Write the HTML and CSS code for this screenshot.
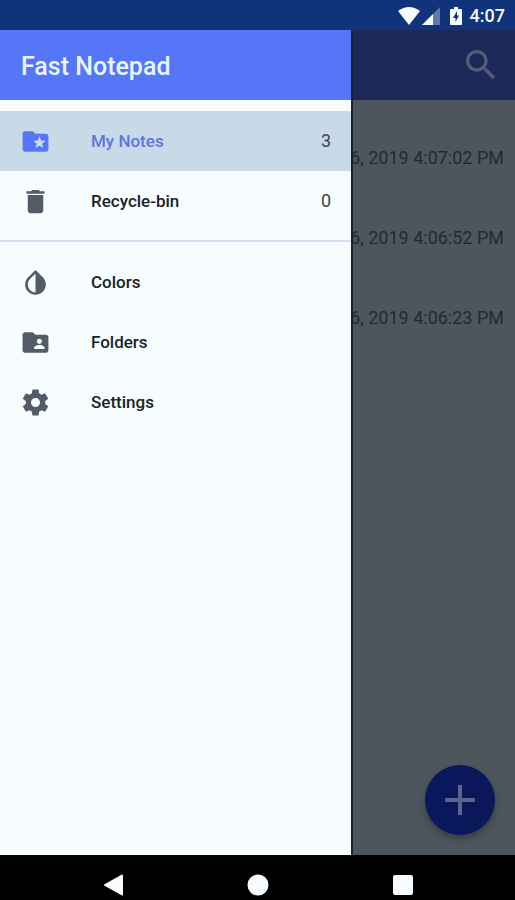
FILE: index.html
```html
<!DOCTYPE html>
<html lang="en">
<head>
<meta charset="utf-8">
<meta name="viewport" content="width=device-width, initial-scale=1">
<title>Fast Notepad</title>
<link rel="stylesheet" href="styles.css">
</head>
<body>
<header class="status">
  <svg class="status-wifi" viewBox="0 0 22 18" aria-hidden="true"><path d="M0 4Q11-4 22 4L11 18Z"/></svg>
  <svg class="status-signal" viewBox="0 0 18 18" aria-hidden="true"><path d="M0 18 18 0V18Z" opacity=".35"/><path d="M0 18 11 7V18Z"/></svg>
  <svg class="status-battery" viewBox="0 0 12 18" aria-hidden="true"><path fill-rule="evenodd" d="M4 0h4v2h3q1 0 1 1v14q0 1-1 1H1q-1 0-1-1V3q0-1 1-1h3ZM7 4 3 11h2.500v4L9 8.500H7Z"/></svg>
  <time class="status-time">4:07</time>
</header>
<div class="app">
  <aside class="drawer">
    <h1 class="drawer-title">Fast Notepad</h1>
    <nav class="menu" aria-label="Main">
      <a class="item item-active" href="#notes">
        <svg class="icon" viewBox="0 0 24 24" aria-hidden="true"><path d="M20 6h-8l-2-2H4c-1.100 0-2 .9-2 2v12c0 1.100.9 2 2 2h16c1.100 0 2-.9 2-2V8c0-1.100-.9-2-2-2zm-2.060 11L15 15.280 12.060 17l.78-3.330-2.590-2.240 3.410-.29L15 8l1.340 3.140 3.410.29-2.590 2.240.78 3.330z"/></svg>
        <span class="label">My Notes</span><span class="count">3</span>
      </a>
      <a class="item" href="#bin">
        <svg class="icon" viewBox="0 0 24 24" aria-hidden="true"><path d="M6 19c0 1.100.9 2 2 2h8c1.100 0 2-.9 2-2V7H6v12zM19 4h-3.500l-1-1h-5l-1 1H5v2h14V4z"/></svg>
        <span class="label">Recycle-bin</span><span class="count">0</span>
      </a>
      <hr class="divider">
      <a class="item" href="#colors">
        <svg class="icon" viewBox="0 0 24 24" aria-hidden="true"><path d="M17.660 7.930 12 2.270 6.340 7.930c-3.120 3.120-3.120 8.190 0 11.310C7.900 20.800 9.950 21.580 12 21.580s4.100-.78 5.660-2.340c3.120-3.120 3.120-8.190 0-11.310zM12 19.590c-1.600 0-3.110-.62-4.240-1.760C6.620 16.690 6 15.190 6 13.590s.62-3.110 1.760-4.240L12 5.100v14.490z"/></svg>
        <span class="label">Colors</span>
      </a>
      <a class="item" href="#folders">
        <svg class="icon" viewBox="0 0 24 24" aria-hidden="true"><path d="M20 6h-8l-2-2H4c-1.100 0-2 .9-2 2v12c0 1.100.9 2 2 2h16c1.100 0 2-.9 2-2V8c0-1.100-.9-2-2-2zm-5 3c1.100 0 2 .9 2 2s-.9 2-2 2-2-.9-2-2 .9-2 2-2zm4 8h-8v-1c0-1.330 2.670-2 4-2s4 .67 4 2v1z"/></svg>
        <span class="label">Folders</span>
      </a>
      <a class="item" href="#settings">
        <svg class="icon" viewBox="0 0 24 24" aria-hidden="true"><path d="M19.430 12.980c.04-.32.07-.64.07-.98s-.03-.66-.07-.98l2.110-1.650c.19-.15.24-.42.12-.64l-2-3.460c-.12-.22-.39-.3-.61-.22l-2.490 1c-.52-.4-1.080-.73-1.690-.98l-.38-2.650C14.460 2.180 14.250 2 14 2h-4c-.25 0-.46.18-.49.42l-.38 2.650c-.61.25-1.170.59-1.690.98l-2.490-1c-.23-.09-.49 0-.61.22l-2 3.460c-.13.22-.07.49.12.64l2.110 1.650c-.04.32-.07.65-.07.98s.03.66.07.98l-2.110 1.650c-.19.15-.24.42-.12.64l2 3.460c.12.22.39.3.61.22l2.490-1c.52.4 1.080.73 1.690.98l.38 2.650c.03.24.24.42.49.42h4c.25 0 .46-.18.49-.42l.38-2.650c.61-.25 1.170-.59 1.690-.98l2.490 1c.23.09.49 0 .61-.22l2-3.460c.12-.22.07-.49-.12-.64l-2.110-1.650zM12 15.500c-1.930 0-3.500-1.570-3.500-3.500s1.570-3.500 3.500-3.500 3.500 1.570 3.500 3.500-1.570 3.500-3.500 3.500z"/></svg>
        <span class="label">Settings</span>
      </a>
    </nav>
  </aside>
  <main class="page">
    <div class="toolbar">
      <button class="search" type="button" aria-label="Search">
        <svg viewBox="0 0 24 24" aria-hidden="true"><path d="M15.500 14h-.79l-.28-.27C15.410 12.590 16 11.110 16 9.500 16 5.910 13.090 3 9.500 3S3 5.910 3 9.500 5.910 16 9.500 16c1.610 0 3.090-.59 4.230-1.570l.27.28v.79l5 4.990L20.490 19l-4.990-5zm-6 0C7.010 14 5 11.990 5 9.500S7.010 5 9.500 5 14 7.010 14 9.500 11.990 14 9.500 14z"/></svg>
      </button>
    </div>
    <ul class="notes">
      <li class="note">6, 2019 4:07:02 PM</li>
      <li class="note">6, 2019 4:06:52 PM</li>
      <li class="note">6, 2019 4:06:23 PM</li>
    </ul>
    <button class="add" type="button" aria-label="Add note">
      <svg viewBox="0 0 32 32" aria-hidden="true"><path d="M14 1h4v13h13v4H18v13h-4V18H1v-4h13Z"/></svg>
    </button>
  </main>
</div>
<footer class="system">
  <button class="key" type="button" aria-label="Back"><svg viewBox="0 0 22 22" aria-hidden="true"><path d="M1.500 10.200 18.500.8q1.500-.8 1.500 1v18.400q0 1.800-1.500 1L1.500 11.800q-1.500-.8 0-1.600Z"/></svg></button>
  <button class="key" type="button" aria-label="Home"><svg viewBox="0 0 22 22" aria-hidden="true"><circle cx="11" cy="11" r="10.500"/></svg></button>
  <button class="key" type="button" aria-label="Recent apps"><svg viewBox="0 0 22 22" aria-hidden="true"><rect x="1" y="1" width="20" height="20" rx="2"/></svg></button>
</footer>
</body>
</html>
```
FILE: styles.css
```css
* {
  box-sizing: border-box;
}

body {
  margin: 0;
  min-height: 100vh;
  display: flex;
  flex-direction: column;
  font-family: Roboto, "Liberation Sans", sans-serif;
  background: #000;
}

button {
  padding: 0;
  border: 0;
  background: none;
}

svg {
  display: block;
  fill: currentColor;
}

.status {
  height: 30px;
  display: flex;
  align-items: center;
  justify-content: flex-end;
  padding: 2px 10px 0 0;
  background: #11337b;
  color: #f5fbff;
}

.status-wifi {
  width: 22px;
  height: 18px;
  margin-right: 2px;
}

.status-signal {
  width: 18px;
  height: 18px;
  margin-right: 10px;
}

.status-battery {
  width: 12px;
  height: 18px;
  margin-right: 8px;
}

.status-time {
  font-size: 18px;
  font-weight: 500;
  line-height: 20px;
}

.app {
  flex: 1;
  display: grid;
  grid-template-columns: minmax(0, 351fr) minmax(0, 164fr);
}

.drawer {
  background: #f7fcff;
}

.drawer-title {
  margin: 0;
  padding: 0 21px;
  font-size: 25px;
  font-weight: 500;
  line-height: 74px;
  height: 70px;
  background: #5577f7;
  color: #e6f5ff;
}

.menu {
  padding-top: 11px;
}

.item {
  height: 60px;
  display: flex;
  align-items: center;
  padding: 0 20px;
  color: #1b2226;
  text-decoration: none;
  font-size: 17px;
  font-weight: 500;
  line-height: 20px;
}

.icon {
  width: 31px;
  height: 31px;
  margin-right: 40px;
  color: #525c66;
}

.label {
  flex: 1;
}

.count {
  font-weight: 400;
  font-size: 18px;
  color: #3b454c;
}

.item-active {
  background: #c8dae8;
}

.item-active .label {
  color: #6175de;
}

.item-active .icon {
  color: #5577f7;
}

.divider {
  margin: 9px 0 10px;
  border: 0;
  height: 2px;
  background: #cfe0f3;
}

.page {
  display: flex;
  flex-direction: column;
  overflow: hidden;
  background: #4e565d;
  border-left: 2px solid #1c2229;
}

.toolbar {
  height: 70px;
  display: flex;
  align-items: center;
  justify-content: flex-end;
  padding-right: 14px;
  background: #1c2858;
}

.search {
  color: #535d78;
}

.search svg {
  width: 40px;
  height: 40px;
}

.notes {
  flex: 1;
  margin: 0;
  padding: 18px 0 0;
  list-style: none;
}

.note {
  height: 80px;
  display: flex;
  align-items: center;
  justify-content: flex-end;
  padding-right: 11px;
  font-size: 18px;
  line-height: 20px;
  white-space: nowrap;
  color: #25292d;
}

.add {
  align-self: flex-end;
  width: 70px;
  height: 70px;
  margin: 0 20px 20px 0;
  display: grid;
  place-items: center;
  border-radius: 50%;
  background: #0b175b;
  color: #59658a;
  box-shadow: 0 4px 7px rgba(20, 25, 30, 0.4);
}

.add svg {
  width: 32px;
  height: 32px;
}

.system {
  height: 45px;
  display: grid;
  grid-template-columns: repeat(3, 1fr);
  align-items: center;
  justify-items: center;
  padding: 14px 40px 0 42px;
  background: #000;
  color: #f8fcff;
}

.key {
  color: inherit;
}

.key svg {
  width: 22px;
  height: 22px;
}
```
